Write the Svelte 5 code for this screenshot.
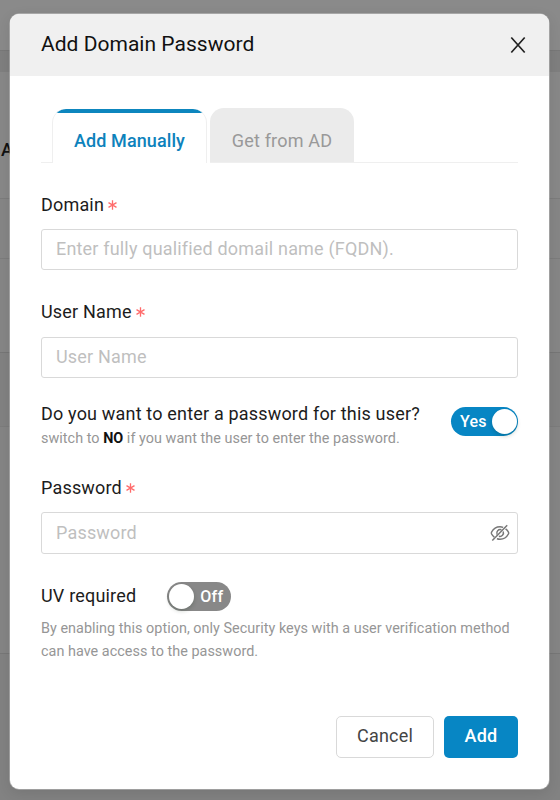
<script>
  let askPassword = $state(true);
  let uvRequired = $state(false);
  let activeTab = $state(0);
  const tabs = ['Add Manually', 'Get from AD'];
</script>

<div class="page">
  <div class="behind">
    <div class="band top"></div>
    <div class="band strip"></div>
    <div class="band head"><span>A</span></div>
    <div class="band row1"></div>
    <div class="band row2"></div>
    <div class="band row3"></div>
    <div class="band row4"></div>
    <div class="band rest"></div>
  </div>

  <div class="dialog" role="dialog" aria-label="Add Domain Password">
    <header>
      <h1>Add Domain Password</h1>
      <button class="close" aria-label="Close">
        <svg width="16" height="18" viewBox="0 0 16 18"><path d="M1.3 1.5 14.7 16.5M14.7 1.5 1.3 16.5" /></svg>
      </button>
    </header>

    <div class="body">
      <nav class="tabs">
        {#each tabs as tab, i}
          <button class="tab" class:active={activeTab === i} onclick={() => (activeTab = i)}>{tab}</button>
        {/each}
        <i class="rule"></i>
      </nav>

      <label class="field domain">
        <span class="label">Domain{@render star()}</span>
        <input type="text" placeholder="Enter fully qualified domail name (FQDN)." />
      </label>

      <label class="field user">
        <span class="label">User Name{@render star()}</span>
        <input type="text" placeholder="User Name" />
      </label>

      <div class="ask">
        <div>
          <p class="question">Do you want to enter a password for this user?</p>
          <p class="hint small">switch to <b>NO</b> if you want the user to enter the password.</p>
        </div>
        <button class="switch on" aria-label="Enter password" onclick={() => (askPassword = !askPassword)}>
          <span>Yes</span><i></i>
        </button>
      </div>

      <label class="field password">
        <span class="label">Password{@render star()}</span>
        <span class="secret">
          <input type="password" placeholder="Password" />
          <svg class="eye" width="20" height="18" viewBox="0 0 20 18">
            <path d="M13.2 3.4C12.2 3 11.1 2.7 10 2.7C6.2 2.7 3.3 4.8 1.6 8Q1.1 9 1.6 10C2.3 11.3 3.2 12.3 4.3 13.2" />
            <path d="M15.6 4.8C16.8 5.7 17.7 6.7 18.4 8Q18.9 9 18.4 10C16.7 13.2 13.8 15.3 10 15.3C8.9 15.3 7.9 15.1 6.9 14.8" />
            <path d="M7.1 10.6A3.5 3.5 0 0 1 11.4 5.8M13.2 7.6A3.5 3.5 0 0 1 8.9 12.2" />
            <path d="M17.2 1.2 2.3 16.6" />
          </svg>
        </span>
      </label>

      <div class="uv">
        <span class="label">UV required</span>
        <button class="switch off" aria-label="UV required" onclick={() => (uvRequired = !uvRequired)}>
          <i></i><span>Off</span>
        </button>
      </div>
      <p class="hint long">By enabling this option, only Security keys with a user verification method<br />can have access to the password.</p>

      <footer>
        <button class="cancel">Cancel</button>
        <button class="add">Add</button>
      </footer>
    </div>
  </div>
</div>

{#snippet star()}
  <svg class="star" width="9" height="10" viewBox="0 0 9 10"><path d="M4.5.3V9.7M.5 2.6 8.5 7.4M8.5 2.6.5 7.4" /></svg>
{/snippet}

<style>
  :global(body) { margin: 0; overflow: hidden; }
  * { box-sizing: border-box; }
  button, input { font: inherit; letter-spacing: inherit; }
  p, h1 { margin: 0; }
  .page {
    position: relative;
    width: 560px;
    height: 800px;
    padding: 14px 11px 11px 10px;
    overflow: hidden;
    background: #878787;
    font-family: Roboto, "Liberation Sans", sans-serif;
    font-size: 18px;
    letter-spacing: 0.18px;
    color: #1c1c1c;
  }
  .behind { position: absolute; inset: 0; display: flex; flex-direction: column; }
  .band { border-bottom: 1px solid #7c7c7c; }
  .top { height: 51px; background: #8a8a8a; border-color: #787878; }
  .strip { height: 21px; background: #7f7f7f; border: 0; }
  .head { height: 127px; background: #888; padding: 67px 0 0 1px; font-weight: 500; line-height: 22px; color: #111; }
  .row1 { height: 60px; background: #868686; }
  .row2 { height: 94px; background: #868686; border-color: #767676; }
  .row3 { height: 74px; background: #828282; }
  .row4 { height: 227px; background: #858585; border-color: #777; }
  .rest { flex: 1; background: #828282; border: 0; }

  .dialog {
    position: relative;
    height: 775px;
    border-radius: 9px;
    background: #fff;
    box-shadow: 0 0 0 0.7px rgba(215, 215, 215, 0.55), 0 4px 14px rgba(0, 0, 0, 0.1);
    overflow: hidden;
  }
  header {
    display: flex;
    align-items: center;
    justify-content: space-between;
    height: 62px;
    padding: 0 23px 0 31px;
    background: #f0f0f0;
  }
  h1 { padding-bottom: 2px; font-size: 21px; font-weight: 400; line-height: 30px; letter-spacing: 0.02px; color: #111; }
  .close { display: flex; padding: 0; border: 0; background: none; }
  .close svg { fill: none; stroke: #222; stroke-width: 1.7; }

  .body { padding: 32px 31px 0; }
  .tabs { display: flex; height: 55px; padding-top: 1px; }
  .tabs::before { content: ""; width: 11px; border-bottom: 1px solid #efefef; }
  .tab {
    width: 144px;
    margin-top: -1px;
    padding: 10px 0 0;
    border: 0;
    border-bottom: 1px solid #efefef;
    border-radius: 14px 14px 0 0;
    background: #ebebeb;
    color: #999;
  }
  .tab.active {
    width: 155px;
    margin: 0 3px 0 0;
    padding-top: 8px;
    border: 1px solid #efefef;
    border-top: 0;
    border-bottom: 0;
    background: linear-gradient(#0d86be 4px, #fff 4px) border-box;
    color: #0d82bc;
    font-weight: 500;
    letter-spacing: 0.1px;
  }
  .rule { flex: 1; border-bottom: 1px solid #efefef; }

  .field { display: block; }
  .label { display: flex; align-items: center; height: 24px; line-height: 24px; }
  .star { margin: 0 0 0 4px; fill: none; stroke: #ff6b6b; stroke-width: 1.3; }
  input {
    display: block;
    width: 100%;
    height: 41px;
    padding: 0 14px 2px;
    border: 1px solid #d9d9d9;
    border-radius: 3px;
    background: #fff;
    outline: 0;
  }
  input::placeholder { color: #bfbfbf; opacity: 1; }
  .domain { padding-top: 30px; }
  .field input { margin-top: 12px; }
  .user { padding-top: 30px; }
  .user input { margin-top: 13px; }

  .ask { display: flex; justify-content: space-between; height: 74px; margin-top: 24px; }
  .question { line-height: 24px; white-space: nowrap; }
  .hint { font-size: 14.4px; letter-spacing: 0.03px; color: #969696; }
  .hint b { font-weight: 700; color: #111; }
  .small { line-height: 22px; margin-top: 2px; }
  .switch {
    display: flex;
    align-items: center;
    justify-content: space-between;
    height: 29px;
    border: 0;
    border-radius: 15px;
    color: #fff;
    font-size: 16px;
    font-weight: 500;
  }
  .switch i { width: 25px; height: 25px; border-radius: 50%; background: #fff; box-shadow: 0 2px 4px rgba(0, 35, 11, 0.2); }
  .on { width: 67px; margin-top: 5px; padding: 0 1.5px 0 9px; background: #0786c4; }
  .off { width: 64px; margin-left: 31px; padding: 0 8px 0 2px; background: #888; }
  .secret { position: relative; display: block; }
  .secret input { height: 42px; }
  .eye { position: absolute; right: 8px; top: 12px; fill: none; stroke: #777; stroke-width: 1.5; }

  .uv { display: flex; align-items: center; height: 30px; margin-top: 27px; }
  .long { line-height: 23px; margin-top: 6px; white-space: nowrap; }
  footer { display: flex; justify-content: flex-end; gap: 10px; margin-top: 53px; }
  footer button { height: 42px; padding: 0 0 3px; border-radius: 5px; }
  .cancel { width: 98px; border: 1px solid #d9d9d9; background: #fff; color: #444; }
  .add { width: 74px; border: 0; background: #0786c4; color: #fff; font-weight: 500; }
</style>
